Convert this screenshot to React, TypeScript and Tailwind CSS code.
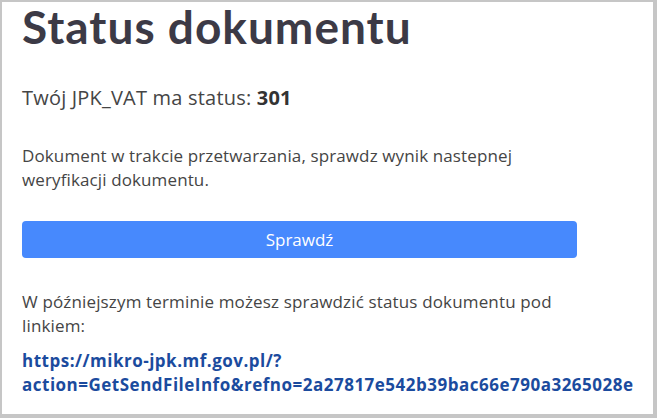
export default function App() {
  return (
    <div className="w-[657px] h-[418px] bg-white border-l-2 border-t-2 border-r-4 border-b-4 border-[#c6c6c6] overflow-hidden">
      <div className="pl-5 pt-[2px] font-['Open_Sans',sans-serif] text-[#454545]">
        <h1 className="font-['Lato',sans-serif] font-bold text-[46px] leading-[46px] tracking-[1px] text-[#3c3a46]">
          Status dokumentu
        </h1>
        <p className="mt-[33px] text-[20px] leading-[30px] tracking-[0.2px]">
          Twój JPK_VAT ma status: <b className="font-bold text-[#333]">301</b>
        </p>
        <p className="mt-[31px] w-[555px] text-[17px] leading-[24px] tracking-[0.12px]">
          Dokument w trakcie przetwarzania, sprawdz wynik nastepnej weryfikacji dokumentu.
        </p>
        <button className="mt-[29px] w-[555px] h-[37px] rounded bg-[#4789fd] text-white text-[17px]">
          Sprawdź
        </button>
        <p className="mt-[32px] w-[555px] text-[17px] leading-[24px] tracking-[0.15px]">
          W późniejszym terminie możesz sprawdzić status dokumentu pod linkiem:
        </p>
        <a
          href="#"
          className="block mt-[11px] text-[17px] leading-[24px] font-bold tracking-[0.5px] text-[#1b4b9e] whitespace-nowrap"
        >
          https://mikro-jpk.mf.gov.pl/?
          <br />
          action=GetSendFileInfo&amp;refno=2a27817e542b39bac66e790a3265028e
        </a>
      </div>
    </div>
  );
}
